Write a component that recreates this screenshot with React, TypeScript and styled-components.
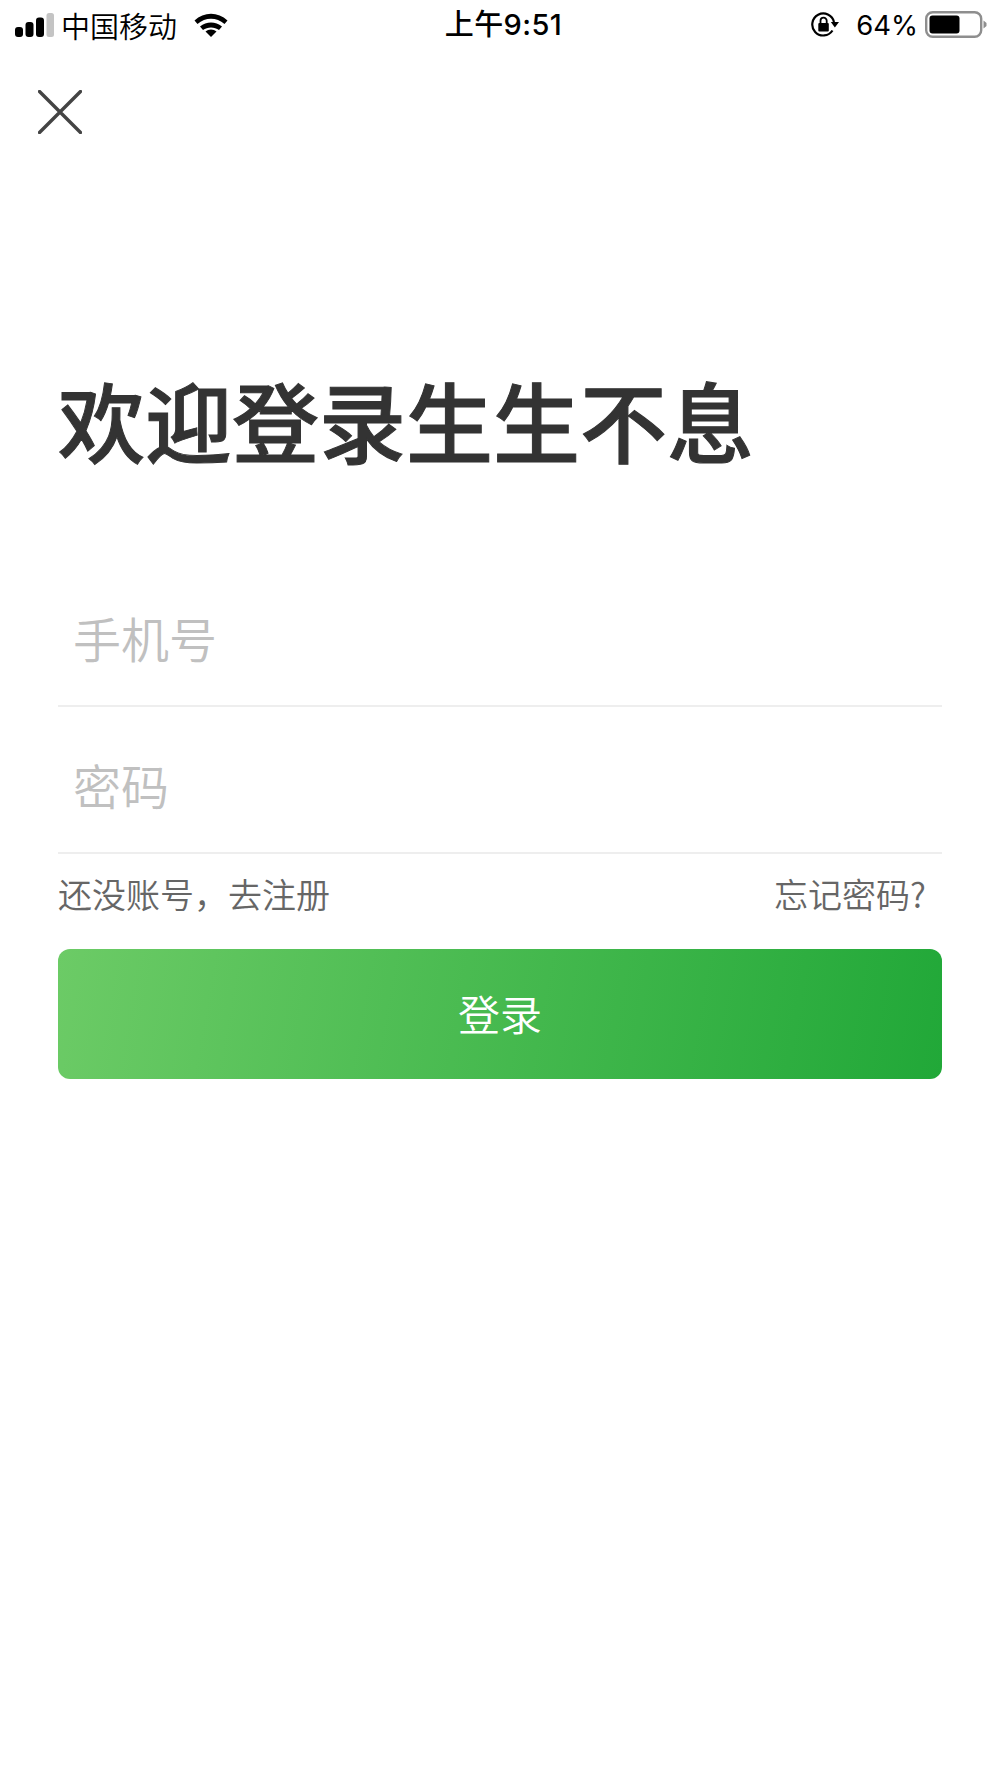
import React from "react";
import styled, { createGlobalStyle } from "styled-components";

const Global = createGlobalStyle`
  html, body { margin: 0; padding: 0; background: #fff; }
  body { font-family: "Liberation Sans", "Noto Sans CJK SC", sans-serif; }
`;

const Page = styled.div`
  width: 1000px;
  height: 1778px;
  background: #fff;
  overflow: hidden;
`;

const StatusBar = styled.div`
  height: 50px;
  display: grid;
  grid-template-columns: 1fr auto 1fr;
  align-items: center;
  padding: 0 13px 0 15px;
  color: #000;
`;

const StatusLeft = styled.div`
  display: flex;
  align-items: center;
`;

const StatusRight = styled.div`
  display: flex;
  align-items: center;
  justify-content: flex-end;
`;

const Carrier = styled.span`
  font-family: "Noto Sans CJK SC", sans-serif;
  font-size: 29px;
  font-weight: 350;
  line-height: 50px;
  margin-left: 7px;
  margin-right: 17px;
`;

const Clock = styled.span`
  font-family: "Inter", "Noto Sans CJK SC", sans-serif;
  font-size: 29px;
  font-weight: 500;
  letter-spacing: 0.4px;
  line-height: 50px;
  margin-left: 5px;
`;

const Percent = styled.span`
  font-family: "Inter", "Liberation Sans", sans-serif;
  font-size: 27.500px;
  line-height: 50px;
  margin: 0 7px 0 17px;
`;

const CloseButton = styled.button`
  display: block;
  width: 44px;
  height: 44px;
  margin: 40px 0 0 38px;
  padding: 0;
  border: 0;
  background: none;
`;

const Content = styled.main`
  padding: 0 58px;
`;

const Title = styled.h1`
  margin: 232px 0 0;
  font-family: "Noto Sans CJK SC", sans-serif;
  font-size: 87px;
  line-height: 106px;
  font-weight: 500;
  -webkit-text-stroke: 1px #333;
  color: #333;
  white-space: nowrap;
`;

const Fields = styled.div`
  margin-top: 89px;
  display: flex;
  flex-direction: column;
  gap: 1px;
`;

const Field = styled.div`
  height: 146px;
  display: flex;
  align-items: center;
  padding: 7px 0 0 15px;
  border-bottom: 2px solid #eeeeee;
  box-sizing: border-box;
`;

const Input = styled.input`
  width: 100%;
  border: 0;
  outline: 0;
  padding: 0;
  background: none;
  font-family: "Noto Sans CJK SC", sans-serif;
  font-size: 48px;
  font-weight: 350;
  color: #333;
  &::placeholder { color: #c0c0c0; opacity: 1; }
`;

const Links = styled.div`
  display: flex;
  justify-content: space-between;
  align-items: center;
  height: 95px;
  padding: 0 16px 17px 0;
  box-sizing: border-box;
  font-family: "Noto Sans CJK SC", sans-serif;
  font-size: 34px;
  font-weight: 350;
  color: #666;
`;

const LoginButton = styled.button`
  display: block;
  width: 100%;
  height: 130px;
  padding: 0 0 4px;
  border: 0;
  border-radius: 12px;
  background: linear-gradient(100deg, #6ccb66 0%, #21a838 100%);
  color: #fff;
  font-family: "Noto Sans CJK SC", sans-serif;
  font-size: 42px;
  font-weight: 350;
`;

const SignalIcon = () => (
  <svg width="39" height="24" viewBox="0 0 39 24" style={{ display: "block" }}>
    <rect x="0" y="14" width="8" height="10" rx="3" fill="#000" />
    <rect x="10.500" y="9" width="8" height="15" rx="3" fill="#000" />
    <rect x="21" y="4.500" width="8" height="19.500" rx="3" fill="#000" />
    <rect x="31.500" y="0" width="7.500" height="24" rx="2.500" fill="#c4c4c4" />
  </svg>
);

const WifiIcon = () => (
  <svg width="34" height="24" viewBox="0 0 34 24" style={{ display: "block" }}>
    <path d="M0.500 7.500 C10 -1.500 24 -1.500 33.500 7.500 L30.500 11 C22.500 4 11.500 4 3.500 11 Z" fill="#000" />
    <path d="M6 13.500 C12.500 8 21.500 8 28 13.500 L25 17 C20.500 13.500 13.500 13.500 9 17 Z" fill="#000" />
    <path d="M11.500 18.500 C14.500 15.800 19.500 15.800 22.500 18.500 L17 24 Z" fill="#000" />
  </svg>
);

const LockIcon = () => (
  <svg width="28" height="26" viewBox="0 0 28 26" style={{ display: "block" }}>
    <path d="M21.500 18.500 A11 11 0 1 1 23 10" fill="none" stroke="#000" strokeWidth="2.200" />
    <path d="M19.800 10 L28 10 L23.900 15.500 Z" fill="#000" />
    <rect x="7.300" y="11" width="10.500" height="8.500" rx="1" fill="#000" />
    <path d="M9.500 11 V8.800 A3.100 3.100 0 0 1 15.700 8.800 V11" fill="none" stroke="#000" strokeWidth="1.800" />
  </svg>
);

const BatteryIcon = () => (
  <svg width="62" height="28" viewBox="0 0 62 28" style={{ display: "block" }}>
    <rect x="1.200" y="1.200" width="55" height="24.600" rx="6.500" fill="none" stroke="#8e8e8e" strokeWidth="2.400" />
    <rect x="4.500" y="4.500" width="30" height="18" rx="3" fill="#000" />
    <path d="M58.500 9.500 L61.500 12 V15 L58.500 17.500 Z" fill="#8e8e8e" />
  </svg>
);

const CloseIcon = () => (
  <svg width="44" height="44" viewBox="0 0 44 44" style={{ display: "block" }}>
    <path d="M1.500 1.500 L42.500 42.500 M42.500 1.500 L1.500 42.500" stroke="#444" strokeWidth="3.400" strokeLinecap="round" />
  </svg>
);

export default function App() {
  return (
    <Page>
      <Global />
      <StatusBar>
        <StatusLeft>
          <SignalIcon />
          <Carrier>中国移动</Carrier>
          <WifiIcon />
        </StatusLeft>
        <Clock>上午9:51</Clock>
        <StatusRight>
          <LockIcon />
          <Percent>64%</Percent>
          <BatteryIcon />
        </StatusRight>
      </StatusBar>
      <CloseButton aria-label="关闭">
        <CloseIcon />
      </CloseButton>
      <Content>
        <Title>欢迎登录生生不息</Title>
        <Fields>
          <Field>
            <Input placeholder="手机号" />
          </Field>
          <Field>
            <Input placeholder="密码" type="password" />
          </Field>
        </Fields>
        <Links>
          <span>还没账号，去注册</span>
          <span>忘记密码?</span>
        </Links>
        <LoginButton>登录</LoginButton>
      </Content>
    </Page>
  );
}
